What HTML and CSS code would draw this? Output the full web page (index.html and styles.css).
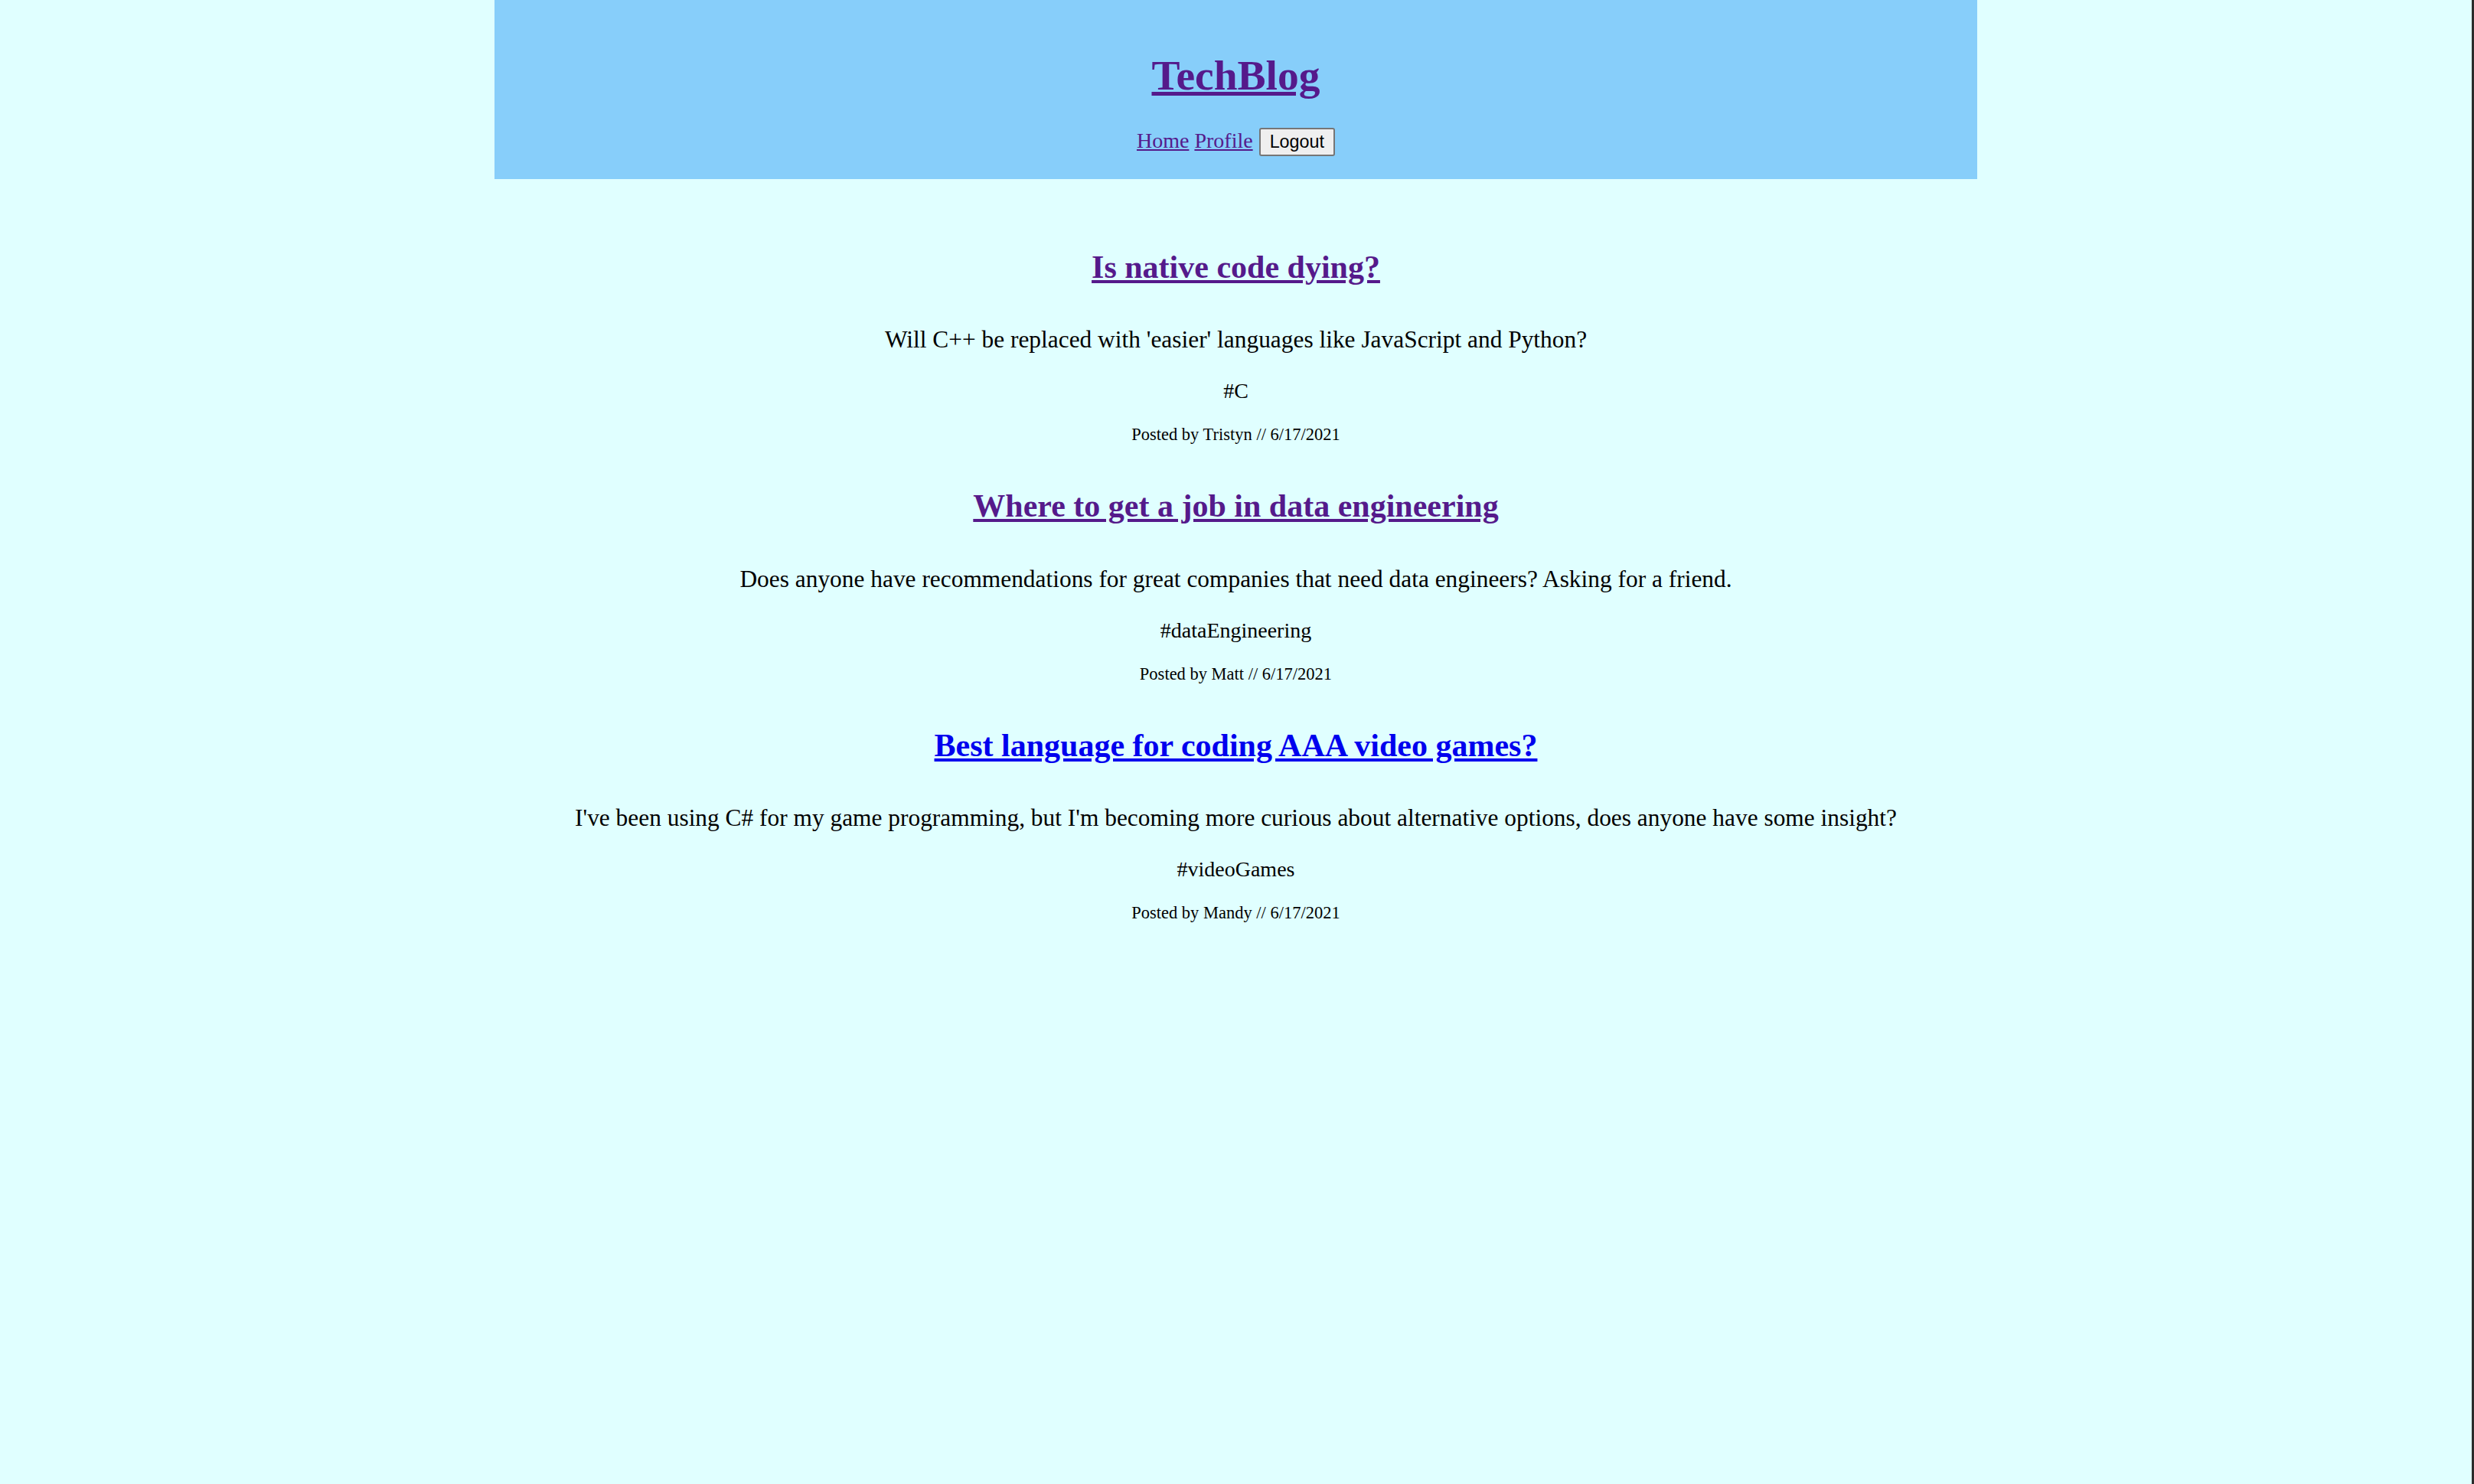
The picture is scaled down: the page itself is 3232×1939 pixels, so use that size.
FILE: index.html
```html
<!DOCTYPE html>
<html lang="en">
<head>
<meta charset="utf-8">
<title>TechBlog</title>
<link rel="stylesheet" href="styles.css">
</head>
<body>
<header class="site-header">
  <h1 class="site-title"><a class="visited" href="#">TechBlog</a></h1>
  <nav class="site-nav">
    <a class="visited" href="#">Home</a>
    <a class="visited" href="#">Profile</a>
    <button class="logout" type="button">Logout</button>
  </nav>
</header>
<main class="posts">
  <article class="post">
    <h2 class="post-title"><a class="visited" href="#">Is native code dying?</a></h2>
    <p class="post-body">Will C++ be replaced with 'easier' languages like JavaScript and Python?</p>
    <p class="post-tag">#C</p>
    <p class="post-meta">Posted by Tristyn // 6/17/2021</p>
  </article>
  <article class="post">
    <h2 class="post-title"><a class="visited" href="#">Where to get a job in data engineering</a></h2>
    <p class="post-body">Does anyone have recommendations for great companies that need data engineers? Asking for a friend.</p>
    <p class="post-tag">#dataEngineering</p>
    <p class="post-meta">Posted by Matt // 6/17/2021</p>
  </article>
  <article class="post">
    <h2 class="post-title"><a class="unvisited" href="#">Best language for coding AAA video games?</a></h2>
    <p class="post-body">I've been using C# for my game programming, but I'm becoming more curious about alternative options, does anyone have some insight?</p>
    <p class="post-tag">#videoGames</p>
    <p class="post-meta">Posted by Mandy // 6/17/2021</p>
  </article>
</main>
</body>
</html>
```
FILE: styles.css
```css
html {
  height: 100%;
  box-sizing: border-box;
  border-right: 3px solid #2b2b2b;
  background: #e0ffff;
}

body {
  margin: 0;
  font-family: "Liberation Serif", "Times New Roman", serif;
  color: #000;
  line-height: 1.15;
}

a.visited {
  color: #551a8b;
}

a.unvisited {
  color: #0000ee;
}

.site-header {
  width: 60%;
  margin: 0 auto;
  background: #87cefa;
  text-align: center;
  padding: 67px 0 30px;
}

.site-title {
  margin: 0 0 36px;
  font-size: 55.5px;
  line-height: 1.15;
  font-weight: bold;
}

.site-nav {
  font-size: 28px;
  line-height: 1.15;
}

.logout {
  font-family: "Liberation Sans", Arial, sans-serif;
  font-size: 23.33px;
  color: #000;
  background: #efefef;
  border: 2px solid #767676;
  border-radius: 3px;
  padding: 3px 12px;
  line-height: normal;
  margin-left: 1px;
}

.posts {
  padding-top: 91px;
  text-align: center;
}

.post-title {
  margin: 0 0 53px;
  font-size: 42px;
  line-height: 1.15;
}

.post-body {
  margin: 0 0 33px;
  font-size: 31.4px;
  line-height: 1.15;
}

.post-tag {
  margin: 0 0 28px;
  font-size: 28px;
  line-height: 1.15;
}

.post-meta {
  margin: 0 0 56px;
  font-size: 22.5px;
  line-height: 1.15;
}
```
